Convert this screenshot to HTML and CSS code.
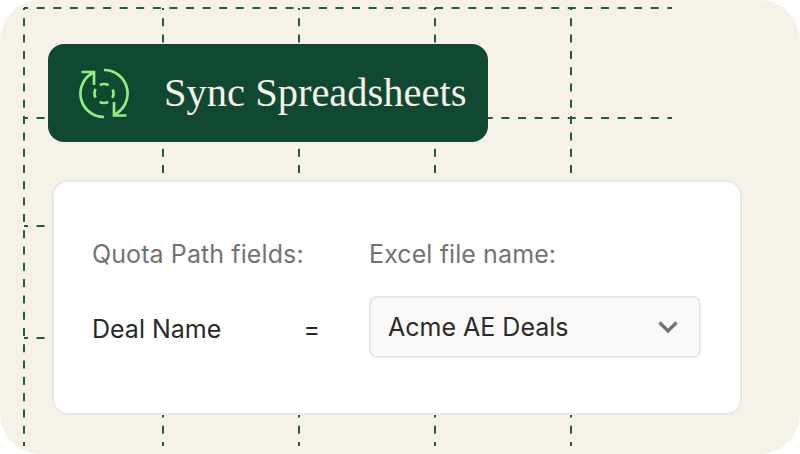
FILE: index.html
```html
<!DOCTYPE html>
<html lang="en">
<head>
<meta charset="utf-8">
<title>Sync Spreadsheets</title>
<link rel="stylesheet" href="styles.css">
</head>
<body>
<main class="frame">
  <svg class="grid" width="800" height="454" viewBox="0 0 800 454" aria-hidden="true">
    <g class="grid-h">
      <line x1="24" y1="8" x2="672" y2="8"/>
      <line x1="24" y1="118" x2="672" y2="118"/>
      <line x1="24" y1="226" x2="672" y2="226"/>
      <line x1="24" y1="338" x2="672" y2="338"/>
    </g>
    <g class="grid-v">
      <line x1="24" y1="8" x2="24" y2="446"/>
      <line x1="163" y1="8" x2="163" y2="446"/>
      <line x1="299" y1="8" x2="299" y2="446"/>
      <line x1="435" y1="8" x2="435" y2="446"/>
      <line x1="571" y1="8" x2="571" y2="446"/>
    </g>
  </svg>
  <header class="banner">
    <svg class="banner-icon" width="52" height="52" viewBox="0 0 52 52" fill="none" aria-hidden="true">
      <path d="M26 50A23.5 23.5 0 0 1 16 5.2"/>
      <path d="M3.5 5H16V18"/>
      <path d="M26 3A23.5 23.5 0 0 1 36 47.8"/>
      <path d="M48.5 48.5H36V35"/>
      <circle class="dash" cx="26" cy="26.5" r="9.5"/>
    </svg>
    <h1 class="banner-title">Sync Spreadsheets</h1>
  </header>
  <section class="card">
    <div class="col-left">
      <p class="label">Quota Path fields:</p>
      <div class="row-value"><span class="field">Deal Name</span><span class="eq">=</span></div>
    </div>
    <div class="col-right">
      <p class="label">Excel file name:</p>
      <div class="select">
        <span>Acme AE Deals</span>
        <svg width="20" height="14" viewBox="0 0 20 14" fill="none" aria-hidden="true"><path d="M1.5 2.5 10 11 18.5 2.5"/></svg>
      </div>
    </div>
  </section>
</main>
</body>
</html>
```
FILE: styles.css
```css
* { box-sizing: border-box; }
html, body { margin: 0; padding: 0; background: #fff; }
.frame {
  position: relative;
  width: 800px;
  height: 454px;
  overflow: hidden;
  background: #f6f2e8;
  border-radius: 40px;
  padding: 44px 58px 0 48px;
  font-family: Inter, "Liberation Sans", sans-serif;
  font-optical-sizing: none;
}
.grid { position: absolute; left: 0; top: 0; }
.grid line { stroke: #225c45; stroke-width: 2; fill: none; }
.grid-h line { stroke-dasharray: 8 8.6; stroke-dashoffset: 4; }
.grid-v line { stroke-dasharray: 8 8.3; stroke-dashoffset: 6; }
.banner {
  position: relative;
  width: 440px;
  height: 98px;
  background: #104832;
  border-radius: 16px;
  display: flex;
  align-items: center;
  padding-left: 30px;
  gap: 34px;
}
.banner-icon { flex: none; }
.banner-icon path, .banner-icon circle { stroke: #93ee7d; stroke-width: 2.7; }
.banner-icon .dash { stroke-dasharray: 9 5.92; stroke-dashoffset: 4.5; }
.banner-title {
  margin: 0 0 2px;
  font-family: "Liberation Serif", serif;
  font-weight: 400;
  font-size: 40.5px;
  color: #f6f2e8;
  white-space: nowrap;
}
.card {
  position: relative;
  width: 690px;
  height: 235px;
  margin: 38px 0 0 4px;
  background: #fff;
  border: 2px solid #e8e8e6;
  border-radius: 16px;
  padding: 57px 39px 0 38px;
  display: flex;
  gap: 49px;
}
.col-left { width: 228px; flex: none; }
.col-right { flex: 1; }
.label { margin: 0; font-size: 25px; letter-spacing: 0.1px; line-height: 30px; color: #737373; white-space: nowrap; }
.row-value {
  display: flex;
  justify-content: space-between;
  margin-top: 45px;
  font-size: 25px;
  line-height: 30px;
  color: #2a2a2a;
}
.select {
  margin-top: 27px;
  height: 62px;
  background: #faf9f7;
  border: 2px solid #e8e8e6;
  border-radius: 8px;
  display: flex;
  align-items: center;
  justify-content: space-between;
  padding: 0 21px 0 17px;
  font-size: 25px;
  color: #2a2a2a;
}
.select path { stroke: #6f6f6f; stroke-width: 3.2; }
```
